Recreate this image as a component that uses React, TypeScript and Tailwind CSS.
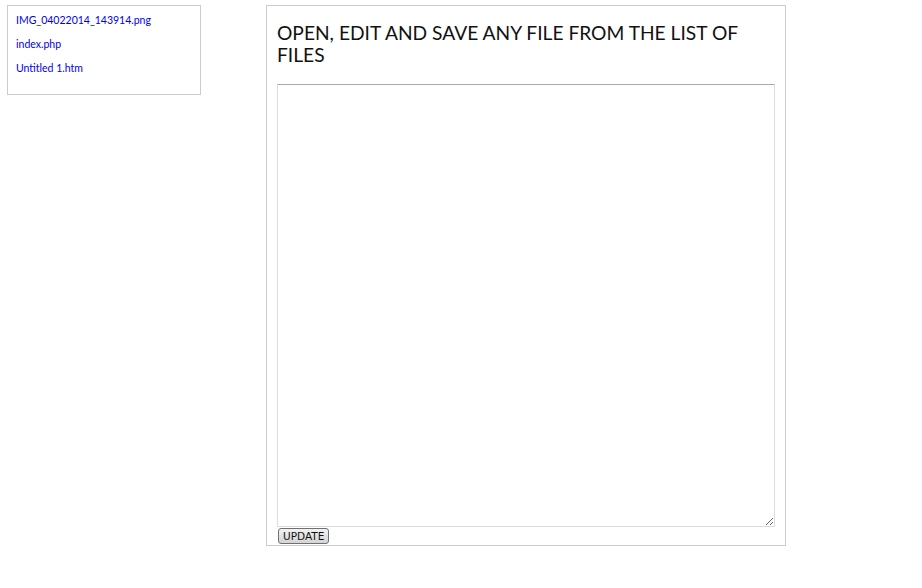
import React from 'react';

const files = ['IMG_04022014_143914.png', 'index.php', 'Untitled 1.htm'];

export default function App() {
  return (
    <div className="min-h-[588px] bg-white font-['Lato',sans-serif]">
      <div className="flex items-start pt-[5px] pl-[7px]">
        <div className="w-[194px] h-[90px] border border-[#cccccc] pl-[8px] pt-[2px]">
          <ul className="flex flex-col">
            {files.map((f) => (
              <li key={f} className="h-[24px] leading-[24px] text-[10.5px]">
                <a href="#" className="text-[#0000ee]">{f}</a>
              </li>
            ))}
          </ul>
        </div>
        <div className="ml-[65px] w-[520px] border border-[#cccccc] px-[10px] pt-[16px] pb-[1px]">
          <h1 className="text-[19.2px] leading-[22px] text-[#111111] font-normal">
            OPEN, EDIT AND SAVE ANY FILE FROM THE LIST OF FILES
          </h1>
          <textarea
            className="block mt-[18px] w-[498px] h-[443px] border border-[#dddddd] border-t-[#aaaaaa] outline-none resize"
          />
          <button className="block mt-[1px] ml-[1px] h-[16px] px-[4px] text-[10.5px] leading-[12px] font-['DejaVu_Sans',sans-serif] text-[#111] border border-[#707070] rounded-[3px] bg-gradient-to-b from-[#f2f2f2] to-[#d4d4d4]">
            UPDATE
          </button>
        </div>
      </div>
    </div>
  );
}
